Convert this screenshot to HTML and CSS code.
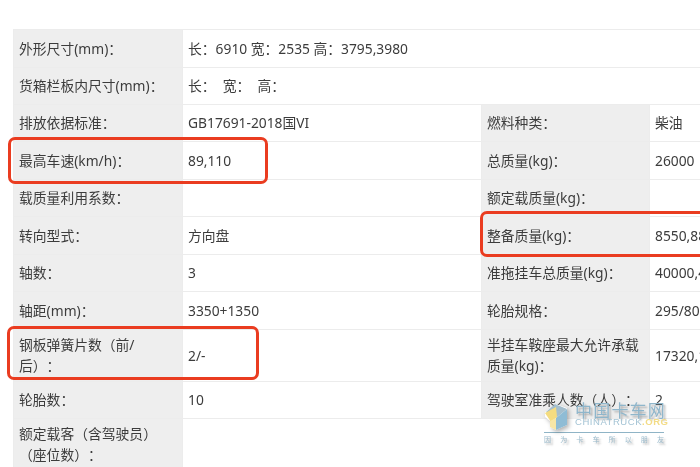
FILE: index.html
```html
<!DOCTYPE html>
<html lang="zh-CN">
<head>
<meta charset="utf-8">
<title>参数表</title>
<link rel="stylesheet" href="styles.css">
</head>
<body>
<div class="page">
  <table class="spec">
    <colgroup><col class="c1"><col class="c2"><col class="c3"><col class="c4"></colgroup>
    <tbody>
      <tr class="h38"><th>外形尺寸(mm)：</th><td colspan="3">长：6910 宽：2535 高：3795,3980</td></tr>
      <tr class="h37"><th>货箱栏板内尺寸(mm)：</th><td colspan="3">长：&nbsp;&nbsp;宽：&nbsp;&nbsp;高：</td></tr>
      <tr class="h37"><th>排放依据标准：</th><td>GB17691-2018国VI</td><th>燃料种类：</th><td>柴油</td></tr>
      <tr class="h38"><th>最高车速(km/h)：</th><td>89,110</td><th>总质量(kg)：</th><td>26000</td></tr>
      <tr class="h37"><th>载质量利用系数：</th><td></td><th>额定载质量(kg)：</th><td></td></tr>
      <tr class="h38"><th>转向型式：</th><td>方向盘</td><th>整备质量(kg)：</th><td>8550,8800</td></tr>
      <tr class="h37"><th>轴数：</th><td>3</td><th>准拖挂车总质量(kg)：</th><td>40000,40000</td></tr>
      <tr class="h38"><th>轴距(mm)：</th><td>3350+1350</td><th>轮胎规格：</th><td>295/80R22.5</td></tr>
      <tr class="h52"><th>钢板弹簧片数（前/后）：</th><td>2/-</td><th>半挂车鞍座最大允许承载质量(kg)：</th><td>17320,17320</td></tr>
      <tr class="h37"><th>轮胎数：</th><td>10</td><th>驾驶室准乘人数（人）：</th><td>2</td></tr>
      <tr class="h52 last"><th>额定载客（含驾驶员）（座位数）：</th><td colspan="3"></td></tr>
    </tbody>
  </table>

  <div class="mark mark-speed"></div>
  <div class="mark mark-mass"></div>
  <div class="mark mark-spring"></div>

  <div class="logo">
    <div class="logo-top">
      <svg class="cube" width="24" height="28" viewBox="0 0 24 28" aria-hidden="true">
        <path d="M1 9 L12 1 L23 5 V22 L12 27 L6 24 V18 L1 14 Z" fill="#fff"/>
        <path d="M11 1 L23 6 L12 15 L2 9 Z" fill="#7ea3b8" fill-opacity=".7"/>
        <path d="M23 6 V22 L12 27 V15 Z" fill="#8fbcd5"/>
        <path d="M1 10 L12 4 L13 14 L7 19 Z" fill="#f4dc80"/>
        <path d="M6 18 L12 15 V27 L6 24 Z" fill="#f7e6a6"/>
      </svg>
      <div class="brand">
        <div class="brand-cn">中国卡车网</div>
        <div class="brand-en">CHINATRUCK<span class="org">.ORG</span></div>
      </div>
    </div>
    <div class="slogan"><span>因</span><span>为</span><span>卡</span><span>车</span><span>所</span><span>以</span><span>朋</span><span>友</span></div>
  </div>
</div>
</body>
</html>
```
FILE: styles.css
```css
html, body {
  margin: 0;
  padding: 0;
  background: #fff;
}
.page {
  position: relative;
  width: 700px;
  height: 467px;
  overflow: hidden;
  padding: 29px 0 0 13px;
  box-sizing: border-box;
  font-family: "Noto Sans", "Noto Sans CJK SC", sans-serif;
  font-size: 13.8px;
  line-height: 21px;
  color: #3c3c3c;
  text-spacing-trim: space-all;
}
.spec {
  border-collapse: collapse;
  table-layout: fixed;
  width: 940px;
  filter: blur(0.35px);
}
.c1 { width: 169px; }
.c2 { width: 299px; }
.c3 { width: 168px; }
.c4 { width: 304px; }
.spec th, .spec td {
  border: 1px solid #ececec;
  padding: 0 5px 1px;
  font-weight: 400;
  text-align: left;
  vertical-align: middle;
}
.spec th { background: #eee; padding-right: 10px; }
.spec td { white-space: nowrap; }
.last td { border: 0; border-top: 1px solid #ececec; }
.h37 { height: 37px; }
.h38 { height: 38px; }
.h52 { height: 52px; }

.mark {
  position: absolute;
  box-sizing: border-box;
  border: 3px solid #ea3c20;
  border-radius: 7px;
}
.mark-speed { left: 8px; top: 137px; width: 260px; height: 47px; }
.mark-mass { left: 480px; top: 211px; width: 240px; height: 46px; }
.mark-spring { left: 7px; top: 326px; width: 252px; height: 54px; }

.logo {
  position: absolute;
  left: 544px;
  top: 401px;
  width: 120px;
  filter: blur(0.3px);
}
.logo-top {
  display: flex;
  gap: 7px;
  border-bottom: 1px solid #8fb4c6;
  height: 31px;
}
.cube { flex: none; margin-top: 2px; filter: drop-shadow(2px 2px 2px rgba(0,0,0,.3)); }
.brand { flex: 1; display: flex; flex-direction: column; }
.brand-cn {
  font-family: "Noto Sans CJK SC", sans-serif;
  font-size: 17px;
  line-height: 17px;
  font-weight: 400;
  color: #8fb6cb;
  letter-spacing: 1.2px;
  text-shadow: 2px 2px 2px rgba(0,0,0,.28);
  white-space: nowrap;
}
.brand-en {
  font-family: "Liberation Sans", sans-serif;
  font-size: 9.5px;
  line-height: 12px;
  margin-top: -2px;
  color: #a3c3d4;
  letter-spacing: 0.55px;
  white-space: nowrap;
}
.org { color: #f3dc86; font-weight: 700; }
.slogan {
  display: flex;
  justify-content: space-between;
  margin-top: 1px;
  font-family: "Noto Sans CJK SC", sans-serif;
  font-size: 7px;
  line-height: 10px;
  color: #9cbccd;
  text-shadow: 2px 2px 2px rgba(0,0,0,.3);
}
```
